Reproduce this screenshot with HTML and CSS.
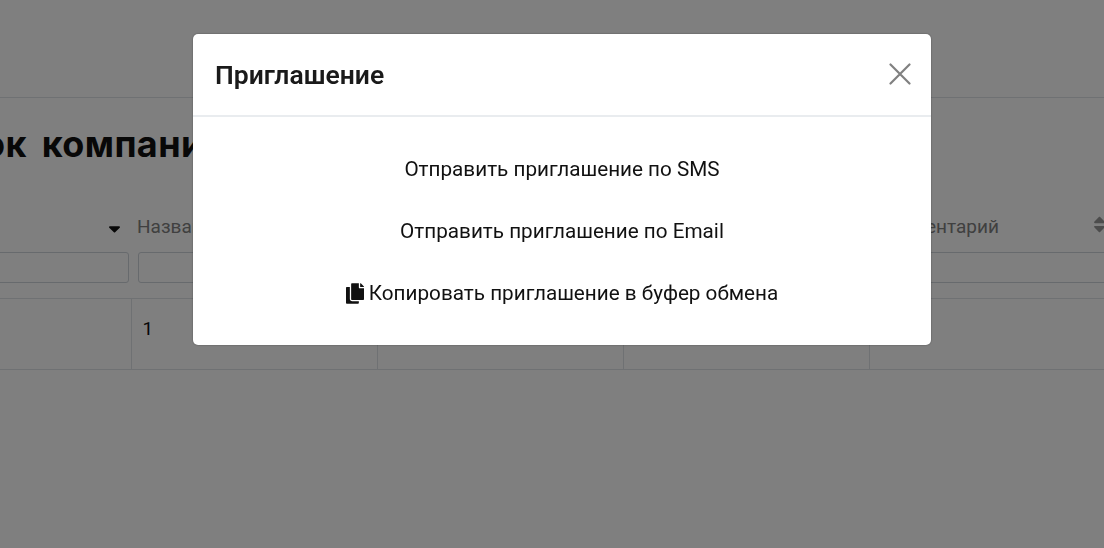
FILE: index.html
```html
<!DOCTYPE html>
<html lang="ru">
<head>
<meta charset="utf-8">
<title>Приглашение</title>
<link rel="stylesheet" href="styles.css">
</head>
<body>
<div class="page">
  <header class="topbar"></header>
  <h1 class="title">Список компаний</h1>
  <table class="grid">
    <thead>
      <tr class="labels">
        <th><span class="label">ID</span>
          <svg class="sort" viewBox="0 0 12 7"><path d="M1 0h10c.9 0 1.3 1 .7 1.6L6.7 6.6c-.4.4-1 .4-1.4 0L.3 1.6C-.3 1 .1 0 1 0z"/></svg>
        </th>
        <th><span class="label">Название</span></th>
        <th><span class="label">Адрес</span></th>
        <th><span class="label">Телефон</span></th>
        <th><span class="label">Комментарий</span>
          <svg class="sort sort-both" viewBox="0 0 12 17"><path d="M1 7h10c.9 0 1.3-1 .7-1.6L6.7.4c-.4-.4-1-.4-1.4 0L.3 5.4C-.3 6 .1 7 1 7zM1 10h10c.9 0 1.3 1 .7 1.6l-5 5c-.4.4-1 .4-1.4 0l-5-5C-.3 11 .1 10 1 10z"/></svg>
        </th>
      </tr>
      <tr class="filters">
        <th><input class="filter" type="text"></th>
        <th><input class="filter" type="text"></th>
        <th><input class="filter" type="text"></th>
        <th><input class="filter" type="text"></th>
        <th><input class="filter" type="text"></th>
      </tr>
    </thead>
    <tbody>
      <tr>
        <td></td><td>1</td><td></td><td></td><td></td>
      </tr>
    </tbody>
  </table>
</div>

<div class="overlay">
  <div class="modal">
    <div class="modal-head">
      <h2 class="modal-title">Приглашение</h2>
      <svg class="close" viewBox="0 0 22 22"><path d="M1.5 1.5l19 19M20.5 1.5l-19 19"/></svg>
    </div>
    <div class="modal-body">
      <a class="action">Отправить приглашение по SMS</a>
      <a class="action">Отправить приглашение по Email</a>
      <a class="action">
        <svg class="copy" viewBox="0 0 448 512"><path d="M320 448v40c0 13.255-10.745 24-24 24H24c-13.255 0-24-10.745-24-24V120c0-13.255 10.745-24 24-24h72v296c0 30.879 25.121 56 56 56h168zm0-344V0H152c-13.255 0-24 10.745-24 24v368c0 13.255 10.745 24 24 24h272c13.255 0 24-10.745 24-24V128H344c-13.2 0-24-10.8-24-24zm120.971-31.029L375.029 7.029A24 24 0 0 0 358.059 0H352v96h96v-6.059a24 24 0 0 0-7.029-16.97z"/></svg>Копировать приглашение в буфер обмена</a>
    </div>
  </div>
</div>
</body>
</html>
```
FILE: styles.css
```css
* { box-sizing: border-box; }
html, body { margin: 0; height: 100%; overflow: hidden; background: #fff; }
body { font-family: Roboto, "Liberation Sans", sans-serif; color: #111; }

.page { width: 1350px; margin-left: -115px; }
.topbar { height: 98px; border-bottom: 1px solid #dee2e6; }
.title {
  margin: 0;
  height: 94px;
  padding-top: 22px;
  padding-left: 4px;
  font-family: Inter, "Open Sans", sans-serif;
  font-size: 36px;
  line-height: 48px;
  font-weight: 700;
  letter-spacing: .4px;
  word-spacing: 6px;
  white-space: nowrap;
  color: #111;
}

.grid { border-collapse: collapse; table-layout: fixed; width: 1230px; }
.grid th, .grid td { width: 246px; padding: 0; font-weight: 400; }
.labels th { height: 60px; text-align: left; padding: 0 6px; vertical-align: top; position: relative; }
.label { display: block; padding-top: 24px; font-size: 19px; line-height: 21px; color: #808080; white-space: nowrap; overflow: hidden; }
.sort { position: absolute; right: 11px; top: 34px; width: 11px; height: 7px; fill: #111; }
.sort-both { right: 10px; top: 24px; height: 17px; fill: #999; }

.filters th { height: 46px; padding: 0 2px 15px 7px; vertical-align: top; border-bottom: 1px solid #dee2e6; }
.filter { display: block; width: 100%; height: 31px; border: 1px solid #ced4da; border-radius: 3px; background: #fff; }

.grid td {
  height: 71px;
  padding: 19px 11px 0;
  vertical-align: top;
  font-size: 18.8px;
  line-height: 22px;
  color: #111;
  border-bottom: 1px solid #dee2e6;
  border-left: 1px solid #dee2e6;
}
.grid td:first-child { border-left: 0; }

.overlay {
  position: fixed;
  inset: 0;
  background: rgba(0, 0, 0, .5);
  display: flex;
  justify-content: center;
  align-items: flex-start;
  padding: 34px 0 0 20px;
}
.modal { width: 738px; height: 311px; background: #fff; border-radius: 5px; box-shadow: 0 0 2px rgba(0,0,0,.4); }
.modal-head {
  height: 83px;
  padding: 0 20px 0 22px;
  display: flex;
  align-items: center;
  justify-content: space-between;
  border-bottom: 2px solid #e9ecef;
}
.modal-title { margin: 0; font-size: 26.5px; font-weight: 600; line-height: 32px; color: #1a1a1a; }
.close { width: 22px; height: 22px; margin-top: -1px; fill: none; stroke: #808080; stroke-width: 2.2; stroke-linecap: round; }
.modal-body { display: flex; flex-direction: column; align-items: center; padding-top: 21px; }
.action { display: flex; align-items: center; height: 62px; font-size: 20.7px; line-height: 62px; color: #111; }
.copy { width: 18px; height: 21px; margin-right: 5px; fill: #111; }
```
